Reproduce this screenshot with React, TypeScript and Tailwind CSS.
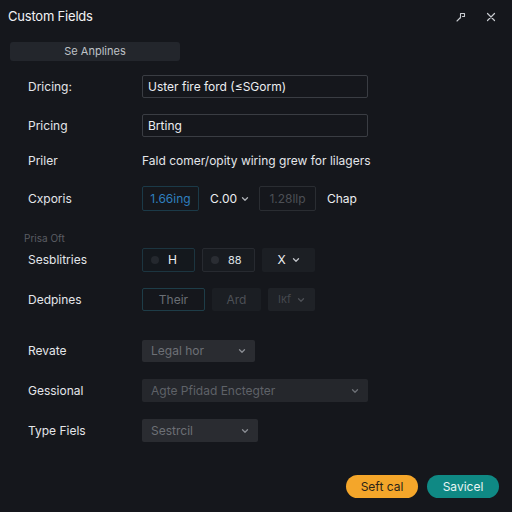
import React from 'react'

const Chevron = ({ className = '' }: { className?: string }) => (
  <svg width="8" height="6" viewBox="0 0 8 6" className={className} fill="none">
    <path d="M1.5 1.8 L4 4.2 L6.5 1.8" stroke="currentColor" strokeWidth="1.3" strokeLinecap="round" strokeLinejoin="round" />
  </svg>
)

function Label({ children }: { children: React.ReactNode }) {
  return <div className="w-[114px] shrink-0 text-[12px] text-[#e4e6ea]">{children}</div>
}

export default function App() {
  return (
    <div className="w-[512px] h-[512px] bg-[#15171c] flex flex-col font-['Inter',sans-serif] text-[#e4e6ea] overflow-hidden">
      {/* header */}
      <div className="h-[33px] pl-[8px] pr-[16px] flex items-center justify-between">
        <span className="text-[13px] tracking-[-0.2px] text-[#f1f2f4]">Custom Fields</span>
        <div className="flex items-center gap-[20px] text-[#c8cbd0]">
          <svg width="10" height="10" viewBox="0 0 10 10" fill="none">
            <path d="M1 9 L4 6 M3.5 6 H4.5 V1.5 H8.5 V4.5 H6.5" stroke="currentColor" strokeWidth="1.1" strokeLinecap="round" strokeLinejoin="round" />
          </svg>
          <svg width="10" height="10" viewBox="0 0 10 10" fill="none">
            <path d="M1.5 1.5 L8.5 8.5 M8.5 1.5 L1.5 8.5" stroke="currentColor" strokeWidth="1.2" strokeLinecap="round" />
          </svg>
        </div>
      </div>

      {/* segment */}
      <div className="ml-[10px] mt-[9px] w-[170px] h-[19px] rounded-[3px] bg-[#23262c] flex items-center justify-center text-[11px] text-[#bfc2c7]">
        Se Anplines
      </div>

      <div className="pl-[28px] flex flex-col">
        <div className="mt-[14px] h-[23px] flex items-center">
          <Label>Dricing:</Label>
          <div className="w-[226px] h-[23px] border border-[#3a3d43] rounded-[2px] px-[5px] flex items-center text-[12px] text-[#eceef1]">
            Uster fire ford (≤SGorm)
          </div>
        </div>

        <div className="mt-[16px] h-[23px] flex items-center">
          <Label>Pricing</Label>
          <div className="w-[226px] h-[23px] border border-[#3a3d43] rounded-[2px] px-[5px] flex items-center text-[12px] text-[#eceef1]">
            Brting
          </div>
        </div>

        <div className="mt-[14px] h-[20px] flex items-center">
          <Label>Priler</Label>
          <div className="text-[12px] text-[#e4e6ea] whitespace-nowrap">Fald comer/opity wiring grew for lilagers</div>
        </div>

        <div className="mt-[15px] h-[25px] flex items-center">
          <Label>Cxporis</Label>
          <div className="w-[57px] h-[25px] border border-[#1b3a48] rounded-[2px] flex items-center justify-center text-[12px] text-[#2f7fbf]">
            1.66ing
          </div>
          <div className="ml-[11px] w-[49px] flex items-center gap-[4px] text-[12px] text-[#eceef1]">
            C.00 <Chevron className="text-[#aeb1b6]" />
          </div>
          <div className="w-[57px] h-[25px] border border-[#2a2d32] rounded-[2px] flex items-center justify-center text-[12px] text-[#4c4f55]">
            1.28llp
          </div>
          <div className="ml-[11px] text-[12px] text-[#eceef1]">Chap</div>
        </div>

        <div className="mt-[20px] -ml-[4px] text-[10px] text-[#5a5d63] leading-[14px]">Prisa Oft</div>

        <div className="mt-[3px] h-[24px] flex items-center">
          <Label>Sesblitries</Label>
          <div className="w-[53px] h-[24px] border border-[#1c3540] bg-[#14181d] rounded-[2px] flex items-center pl-[8px] gap-[9px] text-[12px] text-[#eceef1]">
            <span className="w-[8px] h-[8px] rounded-full bg-[#24282e]" /> H
          </div>
          <div className="ml-[7px] w-[53px] h-[24px] border border-[#272a30] bg-[#181b20] rounded-[2px] flex items-center pl-[8px] gap-[9px] text-[11px] text-[#dfe1e5]">
            <span className="w-[8px] h-[8px] rounded-full bg-[#2a2d33]" /> 88
          </div>
          <div className="ml-[7px] w-[53px] h-[24px] bg-[#1c1f24] rounded-[2px] flex items-center justify-center gap-[6px] text-[12px] text-[#eceef1]">
            X <Chevron className="text-[#c0c3c8]" />
          </div>
        </div>

        <div className="mt-[16px] h-[23px] flex items-center">
          <Label>Dedpines</Label>
          <div className="w-[63px] h-[23px] border border-[#1e3d48] rounded-[2px] flex items-center justify-center text-[12px] text-[#6a6e74]">
            Their
          </div>
          <div className="ml-[7px] w-[49px] h-[23px] bg-[#1b1e23] rounded-[2px] flex items-center justify-center text-[12px] text-[#4d5056]">
            Ard
          </div>
          <div className="ml-[7px] w-[47px] h-[23px] bg-[#1f2227] rounded-[2px] flex items-center justify-center gap-[6px] text-[11px] text-[#45484e]">
            Ікf <Chevron className="text-[#4d5056]" />
          </div>
        </div>

        <div className="mt-[29px] h-[22px] flex items-center">
          <Label>Revate</Label>
          <div className="w-[113px] h-[22px] bg-[#2a2c31] rounded-[2px] pl-[9px] pr-[9px] flex items-center justify-between text-[12px] text-[#6d7076]">
            Legal hor <Chevron className="text-[#8a8d93]" />
          </div>
        </div>

        <div className="mt-[17px] h-[23px] flex items-center">
          <Label>Gessional</Label>
          <div className="w-[226px] h-[23px] bg-[#25272c] rounded-[2px] pl-[9px] pr-[9px] flex items-center justify-between text-[12px] text-[#5f6268]">
            Agte Pfidad Enctegter <Chevron className="text-[#6d7076]" />
          </div>
        </div>

        <div className="mt-[17px] h-[23px] flex items-center">
          <Label>Type Fiels</Label>
          <div className="w-[116px] h-[23px] bg-[#2a2c31] rounded-[2px] pl-[9px] pr-[9px] flex items-center justify-between text-[12px] text-[#6d7076]">
            Sestrcil <Chevron className="text-[#8a8d93]" />
          </div>
        </div>
      </div>

      <div className="mt-auto mb-[14px] pr-[13px] flex justify-end gap-[9px]">
        <button className="w-[72px] h-[23px] rounded-full bg-[#f4a62a] text-[12px] text-[#2b2418]">Seft cal</button>
        <button className="w-[72px] h-[23px] rounded-full bg-[#0f8984] text-[12px] text-[#e8f5f4]">Savicel</button>
      </div>
    </div>
  )
}
